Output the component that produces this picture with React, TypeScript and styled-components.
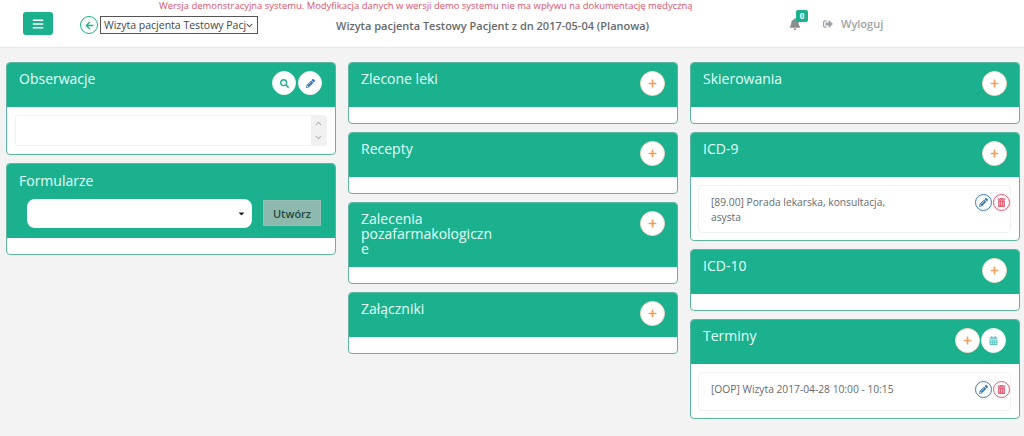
import React from "react"
import styled, { createGlobalStyle } from "styled-components"
import {
  FaArrowLeft,
  FaBars,
  FaBell,
  FaCalendarAlt,
  FaCaretDown,
  FaChevronDown,
  FaChevronUp,
  FaPencilAlt,
  FaPlus,
  FaSearch,
  FaSignOutAlt,
  FaTrashAlt,
} from "react-icons/fa"

const GlobalStyle = createGlobalStyle`
  html, body { margin: 0; padding: 0; height: 100%; }
  body {
    background: #f3f3f4;
    font-family: "Open Sans", "Liberation Sans", sans-serif;
    color: #676a6c;
    overflow: hidden;
  }
`

const TopBar = styled.header`
  height: 47px;
  background: #fff;
  border-bottom: 1px solid #e7e7e9;
`
const Notice = styled.div`
  height: 12px;
  padding-left: 159px;
  font-size: 9.45px;
  line-height: 12px;
  color: #d9536b;
  white-space: nowrap;
`
const Toolbar = styled.div`
  display: flex;
  align-items: flex-start;
  padding-left: 23px;
`
const MenuButton = styled.button`
  width: 30px;
  height: 23px;
  padding: 0;
  border: 0;
  border-radius: 3px;
  background: #1bb18f;
  color: #fff;
  display: flex;
  align-items: center;
  justify-content: center;
  font-size: 12px;
`
const BackButton = styled.button`
  width: 18px;
  height: 18px;
  margin: 4px 2px 0 27px;
  padding: 0;
  border: 1px solid #1bb18f;
  border-radius: 50%;
  background: #fff;
  color: #1bb18f;
  display: flex;
  align-items: center;
  justify-content: center;
  font-size: 9px;
`
const VisitSelect = styled.div`
  width: 158px;
  height: 18px;
  margin-top: 4px;
  box-sizing: border-box;
  border: 1px solid #555;
  padding: 0 4px 0 3px;
  display: flex;
  align-items: center;
  justify-content: space-between;
  font-size: 10.5px;
  color: #444;
  white-space: nowrap;
  overflow: hidden;
  svg { font-size: 7px; flex: none; color: #555; }
`
const VisitTitle = styled.h1`
  margin: 7px 0 0 78px;
  width: 453px;
  font-size: 11px;
  line-height: 14px;
  font-weight: 600;
  color: #676a6c;
  white-space: nowrap;
`
const BellWrap = styled.div`
  position: relative;
  width: 13px;
  margin: 6px 0 0 0;
  color: #8a8d8f;
  font-size: 12px;
  line-height: 14px;
`
const Badge = styled.span`
  position: absolute;
  top: -8px;
  left: 7px;
  width: 12px;
  height: 12px;
  border-radius: 2px;
  background: #1bb18f;
  color: #fff;
  font-size: 8px;
  font-weight: 700;
  line-height: 12px;
  text-align: center;
`
const Logout = styled.a`
  margin: 5px 0 0 21px;
  display: flex;
  align-items: center;
  gap: 8px;
  font-size: 11px;
  line-height: 14px;
  font-weight: 600;
  color: #a0a3a5;
  svg { font-size: 10px; }
`

const Columns = styled.main`
  display: grid;
  grid-template-columns: repeat(3, 330px);
  column-gap: 12px;
  align-items: start;
  padding: 14px 0 0 6px;
`
const Column = styled.div`
  display: flex;
  flex-direction: column;
  gap: 8px;
`
const Panel = styled.section`
  background: #fff;
  border: 1px solid #5eb3a1;
  border-radius: 4px;
  overflow: hidden;
`
const PanelHeader = styled.div`
  min-height: 44px;
  box-sizing: border-box;
  background: #1bb18f;
  display: flex;
  justify-content: space-between;
  align-items: flex-start;
  padding: 8px 12px 11px 12px;
`
const PanelTitle = styled.h2`
  margin: 0;
  width: 135px;
  font-size: 14px;
  line-height: 15px;
  font-weight: 400;
  color: #e2fff8;
  overflow-wrap: anywhere;
`
const Actions = styled.div<{ $gap?: number; $inset?: number }>`
  display: flex;
  gap: ${(p) => p.$gap ?? 1}px;
  margin: 0 ${(p) => p.$inset ?? 0}px 0 0;
`
const RoundButton = styled.button<{ $tone: string; $ring?: string; $size?: number }>`
  width: ${(p) => p.$size ?? 25}px;
  height: ${(p) => p.$size ?? 25}px;
  padding: 0;
  border: 1px solid ${(p) => p.$ring ?? "#f5dcc4"};
  border-radius: 50%;
  background: #fff;
  color: ${(p) => p.$tone};
  display: flex;
  align-items: center;
  justify-content: center;
  font-size: 9px;
`
const EmptyBody = styled.div`
  height: 16px;
`
const ListBody = styled.div`
  padding: 8px 8px 7px 7px;
`
const ScrollBody = styled.div`
  padding: 8px;
`
const ScrollBox = styled.div`
  height: 31px;
  box-sizing: border-box;
  border: 1px solid #f1f1f1;
  border-radius: 3px;
  display: flex;
  justify-content: flex-end;
`
const ScrollTrack = styled.div`
  width: 15px;
  background: #f1f1f1;
  color: #b5b5b5;
  display: flex;
  flex-direction: column;
  justify-content: space-between;
  align-items: center;
  padding: 4px 0;
  font-size: 7px;
`
const Item = styled.div<{ $height: number }>`
  height: ${(p) => p.$height}px;
  box-sizing: border-box;
  border: 1px solid #f0f0f0;
  border-radius: 4px;
  display: flex;
  justify-content: space-between;
  padding: 9px 0 0 12px;
`
const ItemText = styled.p`
  margin: 0;
  width: 195px;
  font-size: 10.25px;
  line-height: 15px;
  color: #676a6c;
`
const ItemActions = styled.div`
  display: flex;
  gap: 1px;
  height: 17px;
  margin-top: -1px;
`
const FormHeader = styled.div`
  height: 74px;
  box-sizing: border-box;
  background: #1bb18f;
  padding: 9px 12px 0;
`
const FormTitle = styled(PanelTitle)`
  width: auto;
`
const FormRow = styled.div`
  display: flex;
  align-items: flex-start;
  gap: 11px;
  margin: 11px 0 0 8px;
`
const FormSelect = styled.div`
  width: 225px;
  height: 29px;
  box-sizing: border-box;
  background: #fff;
  border-radius: 8px;
  color: #222;
  display: flex;
  align-items: center;
  justify-content: flex-end;
  padding-right: 6px;
  font-size: 9px;
`
const CreateButton = styled.button`
  width: 58px;
  height: 26px;
  margin-top: 1px;
  padding: 0;
  border: 1px solid #9bbfb5;
  background: #8db9ae;
  color: #234a44;
  font-family: inherit;
  font-size: 11px;
  font-weight: 600;
`

const PlusButton = () => (
  <RoundButton $tone="#ef9f5f">
    <FaPlus />
  </RoundButton>
)

const ItemButtons = () => (
  <ItemActions>
    <RoundButton $tone="#3b7cab" $ring="#3b7cab" $size={17}>
      <FaPencilAlt />
    </RoundButton>
    <RoundButton $tone="#e0566f" $ring="#e0566f" $size={17}>
      <FaTrashAlt />
    </RoundButton>
  </ItemActions>
)

const SimplePanel = ({ title }: { title: string }) => (
  <Panel>
    <PanelHeader>
      <PanelTitle>{title}</PanelTitle>
      <Actions>
        <PlusButton />
      </Actions>
    </PanelHeader>
    <EmptyBody />
  </Panel>
)

export default function App() {
  return (
    <>
      <GlobalStyle />
      <TopBar>
        <Notice>
          Wersja demonstracyjna systemu. Modyfikacja danych w wersji demo systemu nie ma wpływu na
          dokumentację medyczną
        </Notice>
        <Toolbar>
          <MenuButton>
            <FaBars />
          </MenuButton>
          <BackButton>
            <FaArrowLeft />
          </BackButton>
          <VisitSelect>
            Wizyta pacjenta Testowy Pacj
            <FaChevronDown />
          </VisitSelect>
          <VisitTitle>Wizyta pacjenta Testowy Pacjent z dn 2017-05-04 (Planowa)</VisitTitle>
          <BellWrap>
            <FaBell />
            <Badge>0</Badge>
          </BellWrap>
          <Logout>
            <FaSignOutAlt />
            Wyloguj
          </Logout>
        </Toolbar>
      </TopBar>
      <Columns>
        <Column>
          <Panel>
            <PanelHeader>
              <PanelTitle>Obserwacje</PanelTitle>
              <Actions $gap={2} $inset={1}>
                <RoundButton $tone="#1bb18f" $ring="#e8f7f3" $size={24}>
                  <FaSearch />
                </RoundButton>
                <RoundButton $tone="#2f6fb0" $ring="#e8f1f7" $size={24}>
                  <FaPencilAlt />
                </RoundButton>
              </Actions>
            </PanelHeader>
            <ScrollBody>
              <ScrollBox>
                <ScrollTrack>
                  <FaChevronUp />
                  <FaChevronDown />
                </ScrollTrack>
              </ScrollBox>
            </ScrollBody>
          </Panel>
          <Panel>
            <FormHeader>
              <FormTitle>Formularze</FormTitle>
              <FormRow>
                <FormSelect>
                  <FaCaretDown />
                </FormSelect>
                <CreateButton>Utwórz</CreateButton>
              </FormRow>
            </FormHeader>
            <EmptyBody />
          </Panel>
        </Column>
        <Column>
          <SimplePanel title="Zlecone leki" />
          <SimplePanel title="Recepty" />
          <SimplePanel title="Zalecenia pozafarmakologiczne" />
          <SimplePanel title="Załączniki" />
        </Column>
        <Column>
          <SimplePanel title="Skierowania" />
          <Panel>
            <PanelHeader>
              <PanelTitle>ICD-9</PanelTitle>
              <Actions>
                <PlusButton />
              </Actions>
            </PanelHeader>
            <ListBody>
              <Item $height={48}>
                <ItemText>[89.00] Porada lekarska, konsultacja, asysta</ItemText>
                <ItemButtons />
              </Item>
            </ListBody>
          </Panel>
          <SimplePanel title="ICD-10" />
          <Panel>
            <PanelHeader>
              <PanelTitle>Terminy</PanelTitle>
              <Actions $inset={1}>
                <PlusButton />
                <RoundButton $tone="#5cc4c4" $ring="#e8f7f7">
                  <FaCalendarAlt />
                </RoundButton>
              </Actions>
            </PanelHeader>
            <ListBody>
              <Item $height={39}>
                <ItemText>[OOP] Wizyta 2017-04-28 10:00 - 10:15</ItemText>
                <ItemButtons />
              </Item>
            </ListBody>
          </Panel>
        </Column>
      </Columns>
    </>
  )
}
